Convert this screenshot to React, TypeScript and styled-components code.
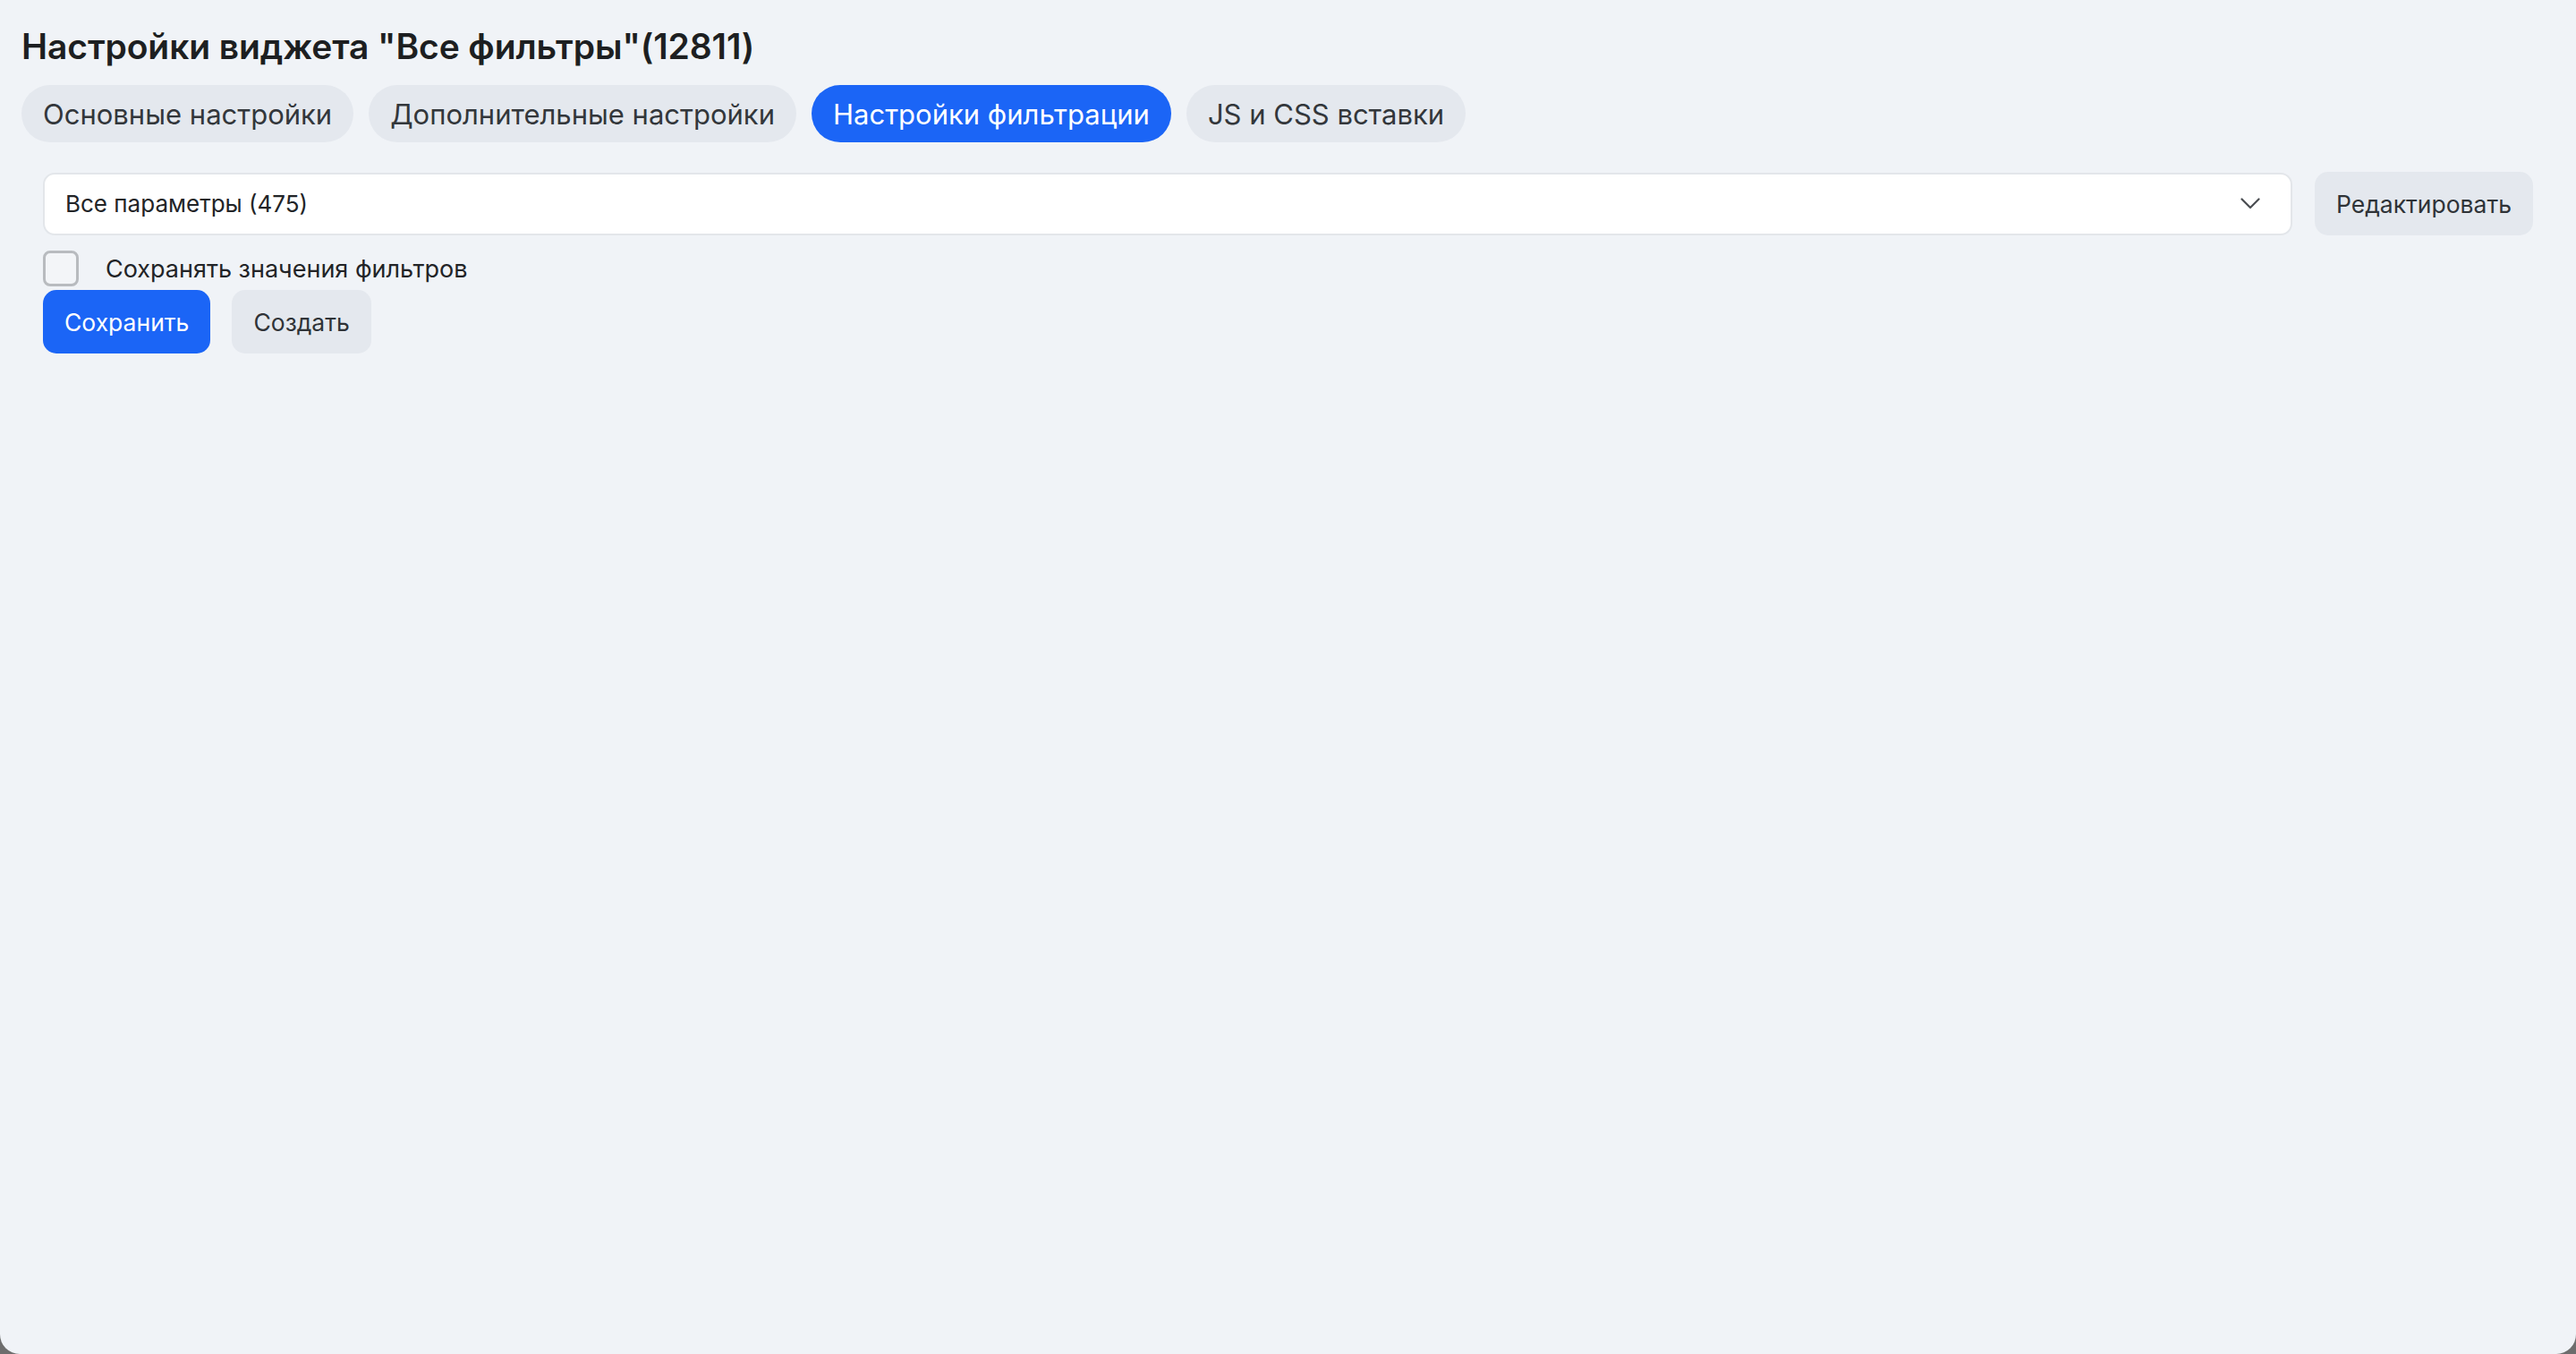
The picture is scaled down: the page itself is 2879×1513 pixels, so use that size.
import React, { useState } from 'react';
import styled, { createGlobalStyle } from 'styled-components';

const GlobalStyle = createGlobalStyle`
  html, body {
    margin: 0;
    padding: 0;
    background: #6d6d6d;
  }
  body {
    font-family: Inter, 'Noto Sans', 'Liberation Sans', sans-serif;
  }
  * {
    box-sizing: border-box;
  }
`;

const Page = styled.div`
  min-height: 100vh;
  background: #f0f3f7;
  border-radius: 0 0 22px 22px;
  padding: 28px 24px;
  display: flex;
  flex-direction: column;
`;

const Title = styled.h1`
  margin: 0;
  font-size: 39px;
  line-height: 48px;
  font-weight: 600;
  color: #1d1f21;
  letter-spacing: -0.1px;
`;

const Tabs = styled.div`
  display: flex;
  gap: 17px;
  margin-top: 19px;
`;

const Tab = styled.button<{ $active?: boolean }>`
  height: 64px;
  padding: 0 24px;
  border: none;
  border-radius: 32px;
  font-family: inherit;
  font-size: 31px;
  font-weight: 400;
  cursor: pointer;
  background: ${(p) => (p.$active ? '#1b65f6' : '#e4e8ee')};
  color: ${(p) => (p.$active ? '#ffffff' : '#33373b')};
`;

const Content = styled.div`
  padding: 0 24px;
  margin-top: 33px;
  display: flex;
  flex-direction: column;
`;

const SelectRow = styled.div`
  display: flex;
  align-items: center;
  gap: 25px;
`;

const Select = styled.div`
  flex: 1;
  height: 70px;
  background: #ffffff;
  border: 2px solid #e3e6ea;
  border-radius: 13px;
  display: flex;
  align-items: center;
  justify-content: space-between;
  padding: 0 34px 0 23px;
  font-size: 26px;
  color: #222427;
  cursor: pointer;
`;

const Button = styled.button<{ $primary?: boolean }>`
  height: 71px;
  padding: 0 24px;
  border: none;
  border-radius: 15px;
  font-family: inherit;
  font-size: 26.5px;
  font-weight: 400;
  cursor: pointer;
  background: ${(p) => (p.$primary ? '#1b65f6' : '#e4e8ee')};
  color: ${(p) => (p.$primary ? '#ffffff' : '#2f3337')};
`;

const CheckRow = styled.label`
  display: flex;
  align-items: center;
  gap: 30px;
  margin-top: 17px;
  height: 40px;
  font-size: 27px;
  color: #222427;
  cursor: pointer;
`;

const CheckBox = styled.span<{ $checked: boolean }>`
  width: 40px;
  height: 40px;
  border: 3px solid #b8bbbf;
  border-radius: 8px;
  background: ${(p) => (p.$checked ? '#1b65f6' : '#f3f5f8')};
  flex-shrink: 0;
`;

const Actions = styled.div`
  display: flex;
  gap: 24px;
  margin-top: 4px;
`;

const Chevron = () => (
  <svg width="22" height="13" viewBox="0 0 22 13" fill="none">
    <path d="M1.5 1.5L11 11L20.5 1.5" stroke="#4a4d51" strokeWidth="2.2" strokeLinecap="round" strokeLinejoin="round" />
  </svg>
);

const tabs = ['Основные настройки', 'Дополнительные настройки', 'Настройки фильтрации', 'JS и CSS вставки'];

export default function App() {
  const [activeTab, setActiveTab] = useState(2);
  const [keepValues, setKeepValues] = useState(false);

  return (
    <>
      <GlobalStyle />
      <Page>
        <Title>Настройки виджета "Все фильтры"(12811)</Title>
        <Tabs>
          {tabs.map((t, i) => (
            <Tab key={t} $active={i === activeTab} onClick={() => setActiveTab(i)}>
              {t}
            </Tab>
          ))}
        </Tabs>
        <Content>
          <SelectRow>
            <Select>
              <span>Все параметры (475)</span>
              <Chevron />
            </Select>
            <Button>Редактировать</Button>
          </SelectRow>
          <CheckRow onClick={() => setKeepValues(!keepValues)}>
            <CheckBox $checked={keepValues} />
            Сохранять значения фильтров
          </CheckRow>
          <Actions>
            <Button $primary>Сохранить</Button>
            <Button>Создать</Button>
          </Actions>
        </Content>
      </Page>
    </>
  );
}
